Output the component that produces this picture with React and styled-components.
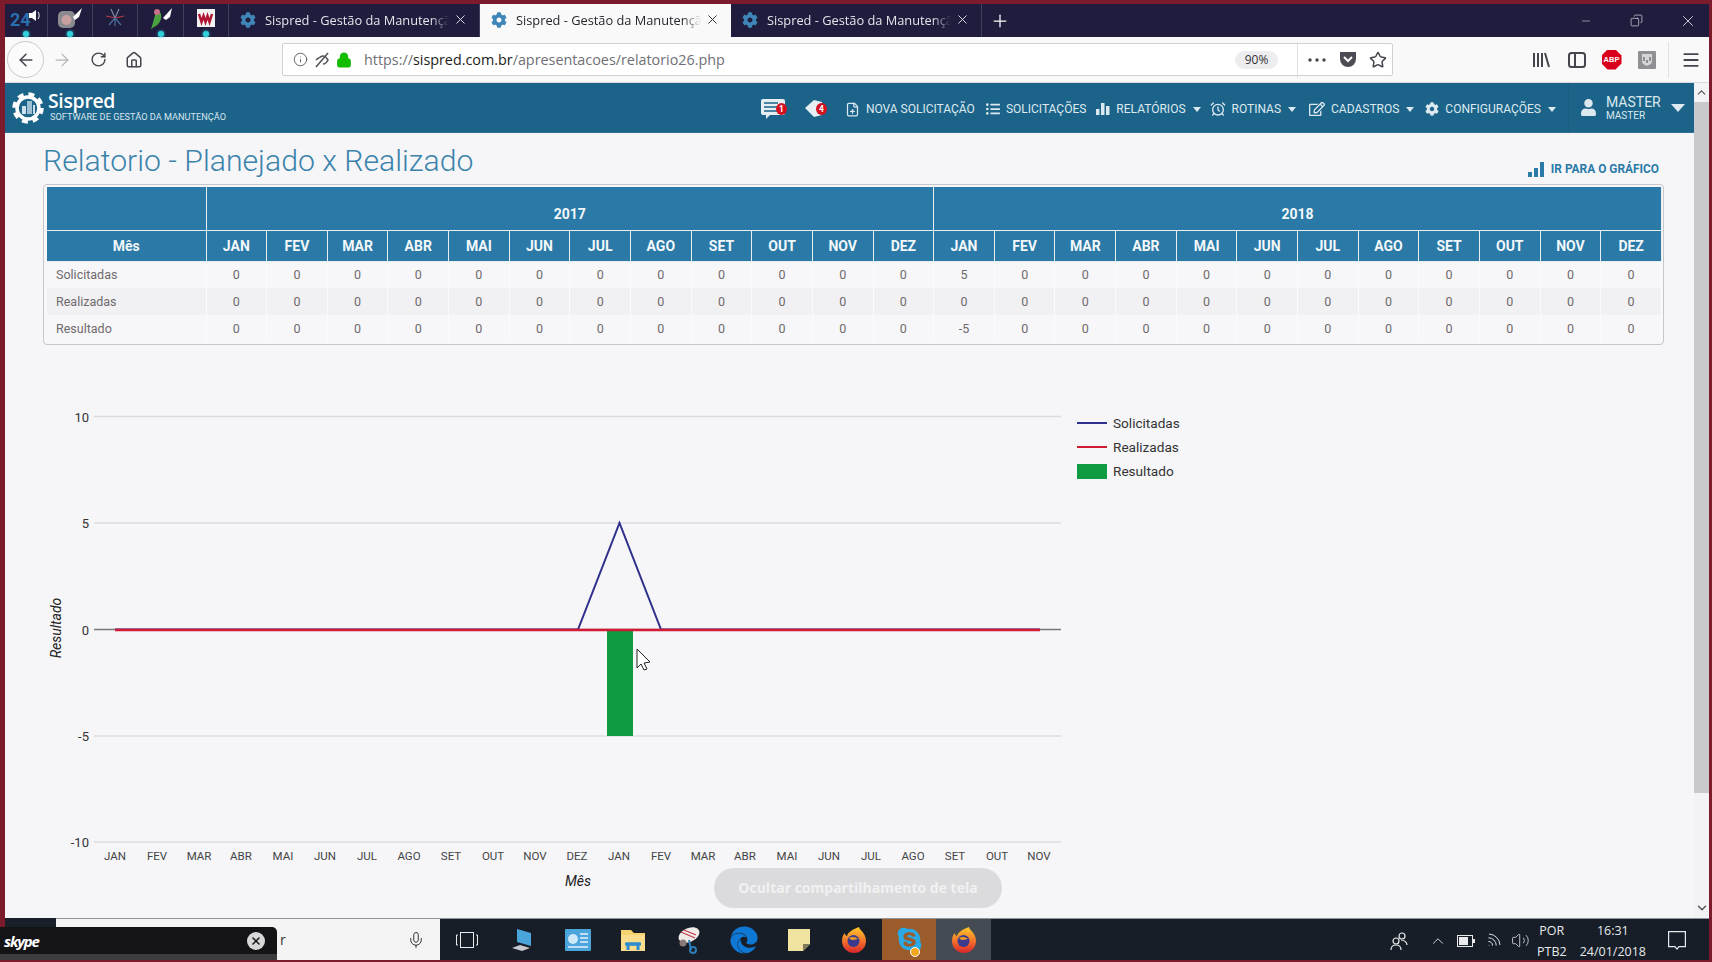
import React from 'react';
import styled, { createGlobalStyle } from 'styled-components';
import { ArrowLeft, ArrowRight, RotateCw, Home, Info, Lock, Star, X, Plus, Minus, Copy, Menu, Mic, ChevronUp, ChevronDown, Wifi, Volume2 } from 'lucide-react';
import { FaListUl, FaRegEdit, FaCog, FaUser, FaEdge, FaSkype } from 'react-icons/fa';
import { LuAlarmClock, LuFilePlus } from 'react-icons/lu';

const Global = createGlobalStyle`
  html, body { margin: 0; padding: 0; background: #6f1a28; }
  #root { width: 1712px; height: 962px; overflow: hidden; }
  * { box-sizing: border-box; }
`;

const Frame = styled.div`
  position: relative;
  width: 1712px;
  height: 962px;
  padding: 4px 3px 2px 5px;
  display: flex;
  flex-direction: column;
  background: #7c1b2b;
  overflow: hidden;
  font-family: Roboto, "Liberation Sans", sans-serif;
`;
const TabStrip = styled.div`
  height: 33px;
  display: flex;
  align-items: stretch;
  background: #1f1c3d;
  color: #fff;
  flex: none;
`;
const PinnedTab = styled.div`
  position: relative;
  width: ${p => p.$w}px;
  display: flex;
  align-items: center;
  justify-content: center;
  padding-bottom: 5px;
  border-right: 1px solid #41405c;
`;
const AudioDot = styled.span`
  position: absolute;
  bottom: 0;
  left: 50%;
  width: 6px;
  height: 6px;
  margin-left: -3px;
  border-radius: 50%;
  background: #2fd0da;
  box-shadow: 0 0 3px #2fd0da;
`;
const Tab = styled.div`
  width: 251px;
  display: flex;
  align-items: center;
  padding: 0 11px 2px;
  background: ${p => (p.$active ? '#f9f9fa' : 'transparent')};
  color: ${p => (p.$active ? '#26262c' : '#e4e4ea')};
  border-right: ${p => (p.$active ? '0' : '1px solid #41405c')};
`;
const TabIcon = styled(FaCog)`
  flex: none;
  margin-right: 9px;
  color: #3f86b8;
`;
const TabLabel = styled.span`
  flex: 1;
  font: 12.8px "Open Sans", sans-serif;
  white-space: nowrap;
  -webkit-mask-image: linear-gradient(90deg, #000 88%, transparent 98%);
  mask-image: linear-gradient(90deg, #000 88%, transparent 98%);
`;
const NewTab = styled.div`
  width: 36px;
  display: flex;
  align-items: center;
  justify-content: center;
`;
const WindowControls = styled.div`
  margin-left: auto;
  display: flex;
  align-items: center;
`;
const WinButton = styled.div`
  width: 51px;
  display: flex;
  justify-content: center;
  padding-left: 8px;
`;
const RestoreIcon = styled(Copy)`
  transform: scaleX(-1);
`;
const Toolbar = styled.div`
  height: 46px;
  flex: none;
  display: flex;
  align-items: center;
  background: #f9f9fa;
  border-bottom: 1px solid #d9d9dc;
  color: #45454d;
`;
const BackButton = styled.div`
  width: 37px;
  height: 37px;
  margin-left: 2px;
  border-radius: 50%;
  border: 1px solid #c9c9cc;
  background: #fbfbfb;
  display: flex;
  align-items: center;
  justify-content: center;
`;
const ToolIcon = styled.div`
  width: ${p => p.$w || 36}px;
  display: flex;
  align-items: center;
  justify-content: center;
  color: ${p => p.$c || '#45454d'};
`;
const UrlBar = styled.div`
  width: 1111px;
  height: 33px;
  margin-left: 130px;
  display: flex;
  align-items: center;
  background: #fff;
  border: 1px solid #d0d0d3;
  border-radius: 2px;
  padding-left: 8px;
`;
const UrlText = styled.div`
  font: 14.35px "Open Sans", sans-serif;
  color: #6f6f76;
  margin-left: 11px;
  flex: 1;
  white-space: nowrap;
  b { font-weight: 400; color: #1c1c20; }
`;
const ZoomPill = styled.div`
  width: 43px;
  height: 18px;
  border-radius: 9px;
  background: #ededf0;
  font: 12px "Open Sans", sans-serif;
  color: #333;
  display: flex;
  align-items: center;
  justify-content: center;
  margin-right: 16px;
`;
const ToolRight = styled.div`
  margin-left: 130px;
  display: flex;
  align-items: center;
  flex: 1;
`;
const ToolDivider = styled.div`
  width: 1px;
  height: 36px;
  background: #e0e0e3;
  margin: 0 4px 0 3px;
`;
const AbpBadge = styled.div`
  width: 20px;
  height: 20px;
  background: #d8001c;
  color: #fff;
  font: bold 7.5px "Liberation Sans", sans-serif;
  clip-path: polygon(30% 0, 70% 0, 100% 30%, 100% 70%, 70% 100%, 30% 100%, 0 70%, 0 30%);
  display: flex;
  align-items: center;
  justify-content: center;
`;
const Body = styled.div`
  flex: 1;
  min-height: 0;
  display: flex;
`;
const Page = styled.div`
  flex: 1;
  min-width: 0;
  display: flex;
  flex-direction: column;
  background: #f6f6f9;
`;
const Scrollbar = styled.div`
  width: 15px;
  flex: none;
  display: flex;
  flex-direction: column;
  align-items: stretch;
  background: #f3f3f5;
  color: #555;
`;
const ScrollUp = styled.div`
  height: 19px;
  display: flex;
  align-items: center;
  justify-content: center;
`;
const ScrollDown = styled.div`
  flex: 1;
  display: flex;
  align-items: flex-end;
  justify-content: center;
  padding-bottom: 3px;
`;
const ScrollThumb = styled.div`
  height: 691px;
  background: #c9c9cc;
`;
const Nav = styled.header`
  height: 50px;
  flex: none;
  display: flex;
  align-items: center;
  background: #1c6389;
  border-bottom: 1px solid #2a7098;
  color: #dce9f0;
`;
const Brand = styled.div`
  display: flex;
  align-items: center;
  padding-left: 7px;
  gap: 4px;
`;
const BrandText = styled.div`
  display: flex;
  flex-direction: column;
  margin-top: -3px;
`;
const BrandName = styled.div`
  font: 600 19.4px/21px "Open Sans", sans-serif;
  color: #fff;
  letter-spacing: -0.3px;
`;
const BrandSub = styled.div`
  font: 9.2px/11px Roboto, sans-serif;
  color: #d5e5ee;
  margin-left: 2px;
`;
const NavItems = styled.nav`
  margin-left: auto;
  display: flex;
  align-items: center;
  height: 100%;
`;
const AlertIcon = styled.div`
  position: relative;
  width: ${p => p.$w}px;
  margin-right: ${p => p.$mr}px;
  margin-top: 2px;
  display: flex;
  color: #e4eef3;
`;
const CountBadge = styled.span`
  position: absolute;
  right: 0;
  top: 4px;
  width: 11px;
  height: 12px;
  border-radius: 50%;
  background: #d4101f;
  color: #fff;
  font: bold 8.5px/12px Roboto, sans-serif;
  text-align: center;
`;
const NavItem = styled.div`
  display: flex;
  align-items: center;
  font-size: 12px;
  gap: 6px;
  margin-top: 3px;
  margin-right: ${p => p.$mr ?? 10}px;
  white-space: nowrap;
  color: #dce9f0;
  svg { flex: none; }
`;
const Caret = styled.span`
  width: 0;
  height: 0;
  margin: 0 ${p => (p.$big ? 0 : 1)}px;
  border-left: ${p => (p.$big ? 7 : 4.5)}px solid transparent;
  border-right: ${p => (p.$big ? 7 : 4.5)}px solid transparent;
  border-top: ${p => (p.$big ? 8 : 5)}px solid currentColor;
`;
const UserBox = styled.div`
  height: 100%;
  display: flex;
  align-items: center;
  border-left: 1px solid #1a5b7f;
  padding: 0 9px 0 11px;
`;
const UserText = styled.div`
  display: flex;
  flex-direction: column;
  margin: 0 9px 0 9px;
  width: 56px;
`;
const UserName = styled.div`
  font-size: 14px;
  line-height: 16px;
`;
const UserRole = styled.div`
  font-size: 10px;
  line-height: 12px;
`;
const Content = styled.main`
  flex: 1;
  min-height: 0;
  overflow: hidden;
  padding: 0 0 0 38px;
`;
const TitleRow = styled.div`
  height: 51px;
  display: flex;
  align-items: flex-start;
  justify-content: space-between;
  padding-right: 35px;
`;
const Title = styled.h1`
  margin: 9px 0 0;
  font: 300 30.2px/38px Roboto, sans-serif;
  color: #3b83aa;
`;
const GraphLink = styled.a`
  margin-top: 27px;
  display: flex;
  align-items: center;
  gap: 6px;
  font: 700 11.9px/18px Roboto, sans-serif;
  color: #2b7ba8;
`;
const TablePanel = styled.section`
  width: 1621px;
  height: 161px;
  border: 1px solid #c6c6cb;
  border-radius: 4px;
  padding: 2px 2px 2px 3px;
  background: #f7f7f9;
`;
const Grid = styled.table`
  width: 1615px;
  border-collapse: collapse;
  table-layout: fixed;
`;
const LabelCol = styled.col`
  width: 159px;
`;
const HeadCell = styled.th`
  height: ${p => p.$h}px;
  background: #2a79a6;
  color: #f2f7fa;
  font-size: 14px;
  font-weight: 700;
  padding: ${p => (p.$year ? '12px 0 0' : '0')};
  border: 1px solid #e8f0f4;
  border-top: 0;
  border-left-width: ${p => (p.$first ? 0 : 1)}px;
`;
const RowCell = styled.td`
  height: 27px;
  background: ${p => (p.$alt ? '#f1f1f3' : '#f7f7f9')};
  color: #6f6a6c;
  font-size: 12.5px;
  text-align: ${p => (p.$label ? 'left' : 'center')};
  padding: ${p => (p.$label ? '0 0 0 9px' : '0')};
  border-right: 1px solid #fbfbfc;
`;
const ChartWrap = styled.div`
  margin-top: 55px;
`;
const ChartSvg = styled.svg`
  display: block;
`;
const ChartText = styled.text`
  font-family: Roboto, sans-serif;
  font-size: ${p => p.$s}px;
  fill: ${p => p.$c || '#444'};
  font-style: ${p => (p.$i ? 'italic' : 'normal')};
  text-anchor: ${p => p.$a || 'middle'};
`;
const Taskbar = styled.footer`
  height: 42px;
  flex: none;
  display: flex;
  align-items: center;
  background: #171e27;
  border-top: 1px solid #8f949a;
  color: #e8eaec;
`;
const SearchBox = styled.div`
  width: 384px;
  height: 100%;
  margin-left: 51px;
  background: #f4f4f5;
  display: flex;
  align-items: center;
  justify-content: space-between;
  padding: 0 15px 0 224px;
  color: #333;
  font: 14px "Open Sans", sans-serif;
`;
const SkypeTab = styled.div`
  position: absolute;
  left: 5px;
  bottom: 35px;
  width: 51px;
  height: 9px;
  background: #1a2029;
`;
const SkypeOverlay = styled.div`
  position: absolute;
  left: 0;
  bottom: 2px;
  width: 277px;
  height: 33px;
  background: #141316;
  border-radius: 0 5px 0 0;
  border-bottom: 6px solid #3c3b3e;
  display: flex;
  align-items: center;
  justify-content: space-between;
  padding: 0 12px 0 4px;
  color: #fff;
  font: italic 700 15px "Open Sans", sans-serif;
  letter-spacing: -1.2px;
`;
const SkypeClose = styled.div`
  width: 18px;
  height: 18px;
  border-radius: 50%;
  background: #d8d8d8;
  color: #111;
  display: flex;
  align-items: center;
  justify-content: center;
`;
const TaskIcon = styled.div`
  width: ${p => p.$w || 55}px;
  height: 100%;
  display: flex;
  align-items: center;
  justify-content: center;
  position: relative;
  background: ${p => p.$bg || 'transparent'};
  flex: none;
`;
const WarnDot = styled.span`
  position: absolute;
  right: 16px;
  bottom: 3px;
  width: 10px;
  height: 10px;
  border-radius: 50%;
  background: #f4a61c;
  border: 1px solid #fff;
`;
const Tray = styled.div`
  margin-left: auto;
  height: 100%;
  display: flex;
  align-items: center;
  padding: 2px 23px 0 0;
  font: 12.5px/21px "Open Sans", sans-serif;
`;
const TrayIcon = styled.div`
  margin-right: ${p => p.$mr}px;
  display: flex;
`;
const WifiIcon = styled(Wifi)`
  transform: rotate(45deg);
`;
const TrayStack = styled.div`
  display: flex;
  flex-direction: column;
  align-items: center;
  margin-right: ${p => p.$mr}px;
`;
const ShareButton = styled.div`
  position: absolute;
  left: 714px;
  top: 868px;
  width: 288px;
  height: 40px;
  border-radius: 20px;
  background: #dbdbdd;
  color: #f1f1f2;
  font: 700 14px/40px "Open Sans", sans-serif;
  text-align: center;
`;

const months = ['JAN','FEV','MAR','ABR','MAI','JUN','JUL','AGO','SET','OUT','NOV','DEZ'];
const rows = [
  { label: 'Solicitadas', at: 12, val: 5 },
  { label: 'Realizadas', at: -1, val: 0 },
  { label: 'Resultado', at: 12, val: -5 },
];
const gridY = [[416.5,'10'],[523,'5'],[629.5,'0'],[736,'-5'],[842,'-10']];
const axisMonths = [...months, ...months.slice(0, 11)];

const Firefox = ({ id }) => (
  <svg width="30" height="30" viewBox="0 0 30 30">
    <defs>
      <linearGradient id={id} x1="0" y1="0" x2="0" y2="1"><stop offset="0" stopColor="#ffcb2b"/><stop offset="0.6" stopColor="#f0682a"/><stop offset="1" stopColor="#d8242e"/></linearGradient>
    </defs>
    <path d="M20 2c1 4 7 6 7 14a12 12 0 0 1-24 0c0-4 1-6 3-8 0 2 1 3 2 3 1-4 5-6 12-9z" fill={`url(#${id})`}/>
    <circle cx="14.5" cy="16" r="6" fill="#3b3a8f"/>
    <path d="M10 13c3-2 7-1 9 1-2 0-3 1-5 1s-3-1-4-2z" fill="#f39a22"/>
  </svg>
);

export default function App() {
  return (
    <Frame>
      <Global />
      <TabStrip>
        <PinnedTab $w={43}>
          <svg width="32" height="22" viewBox="0 0 32 22"><text x="0" y="19" fontFamily="Roboto" fontWeight="700" fontSize="18" fill="#2a6fb0">24</text><path d="M19 6h3l4-3v11l-4-3h-3z" fill="#fff"/><path d="M28 5c1.500 2 1.500 5 0 7" stroke="#fff" fill="none"/></svg>
          <AudioDot />
        </PinnedTab>
        <PinnedTab $w={45}>
          <svg width="28" height="24" viewBox="0 0 28 24"><rect x="2" y="5" width="17" height="17" rx="5" fill="#8a8a90"/><circle cx="10.500" cy="14" r="5" fill="#c8a0a0"/><path d="M17 11l9-9-3 9-4 3z" fill="#fff"/></svg>
          <AudioDot />
        </PinnedTab>
        <PinnedTab $w={45}>
          <svg width="22" height="22" viewBox="0 0 22 22" stroke="#7f8aa0" strokeWidth="1.200"><path d="M11 11L7 2M11 11l4-9"/><path d="M11 11L2 9M11 11l9-2" stroke="#b83a48"/><path d="M11 11L5 18M11 11l6 7M11 11v8" stroke="#4a6f98"/></svg>
        </PinnedTab>
        <PinnedTab $w={46}>
          <svg width="26" height="24" viewBox="0 0 26 24"><path d="M3 23c2-6 3-10 4-14 0-4 5-5 6-1 1 6-2 11-7 13z" fill="#4aa33f"/><circle cx="9" cy="6" r="3" fill="#c9708a"/><path d="M15 12l9-10-2 9-4 3z" fill="#fff"/></svg>
          <AudioDot />
        </PinnedTab>
        <PinnedTab $w={45}>
          <svg width="18" height="18" viewBox="0 0 18 18"><rect width="18" height="18" fill="#f2f2f2"/><path d="M2.500 5l2.500 8 2-6 2 6 2-6 2 6 2.500-8" transform="translate(-.5 0)" fill="none" stroke="#b01634" strokeWidth="2.500"/></svg>
          <AudioDot />
        </PinnedTab>
        {[false, true, false].map((active, i) => (
          <Tab key={i} $active={active}>
            <TabIcon size={16} />
            <TabLabel>Sispred - Gestão da Manutençã</TabLabel>
            <X size={15} strokeWidth={1.500} />
          </Tab>
        ))}
        <NewTab><Plus size={20} strokeWidth={1.500} /></NewTab>
        <WindowControls>
          <WinButton><Minus size={12} strokeWidth={1} /></WinButton>
          <WinButton><RestoreIcon size={13} strokeWidth={1.100} /></WinButton>
          <WinButton><X size={18} strokeWidth={1} /></WinButton>
        </WindowControls>
      </TabStrip>

      <Toolbar>
        <BackButton><ArrowLeft size={20} strokeWidth={1.800} /></BackButton>
        <ToolIcon $w={36} $c="#b4b4b8"><ArrowRight size={20} strokeWidth={1.500} /></ToolIcon>
        <ToolIcon $w={36}><RotateCw size={17} strokeWidth={2} /></ToolIcon>
        <ToolIcon $w={36}><Home size={18} strokeWidth={2} /></ToolIcon>
        <UrlBar>
          <ToolIcon $w={18}><Info size={15} strokeWidth={1.300} /></ToolIcon>
          <ToolIcon $w={26}>
            <svg width="18" height="18" viewBox="0 0 18 18" fill="none" stroke="#55555c" strokeWidth="1.600"><path d="M3 16L15 2"/><path d="M6 7c3-3 6-3 9 2-1 2-3 4-5 4"/><path d="M3 9c1-1 2-2 3-2"/></svg>
          </ToolIcon>
          <ToolIcon $w={18} $c="#12bc00"><Lock size={16} strokeWidth={2.600} fill="#12bc00" /></ToolIcon>
          <UrlText>https://<b>sispred.com.br</b>/apresentacoes/relatorio26.php</UrlText>
          <ZoomPill>90%</ZoomPill>
          <ToolDivider />
          <ToolIcon $w={30}>
            <svg width="18" height="4" viewBox="0 0 18 4" fill="#45454d"><circle cx="2" cy="2" r="1.700"/><circle cx="9" cy="2" r="1.700"/><circle cx="16" cy="2" r="1.700"/></svg>
          </ToolIcon>
          <ToolIcon $w={32}>
            <svg width="18" height="17" viewBox="0 0 18 17"><path d="M1 1h16a1 1 0 0 1 0 1v6a8 8 0 0 1-16 0V2a1 1 0 0 1 0-1z" fill="#4c4c54"/><path d="M5 6l4 4 4-4" stroke="#fff" strokeWidth="2" fill="none"/></svg>
          </ToolIcon>
          <ToolIcon $w={28}><Star size={18} strokeWidth={2} /></ToolIcon>
        </UrlBar>
        <ToolRight>
          <ToolIcon $w={36}>
            <svg width="18" height="18" viewBox="0 0 18 18" stroke="#45454d" strokeWidth="2"><path d="M2 2v14M6 2v14M10 2v14M13 2l4 14" /></svg>
          </ToolIcon>
          <ToolIcon $w={35}>
            <svg width="18" height="16" viewBox="0 0 18 16" fill="none" stroke="#45454d" strokeWidth="2"><rect x="1" y="1" width="16" height="14" rx="2.500"/><path d="M7 1v14"/></svg>
          </ToolIcon>
          <ToolIcon $w={35}><AbpBadge>ABP</AbpBadge></ToolIcon>
          <ToolIcon $w={36}>
            <svg width="18" height="18" viewBox="0 0 18 18"><rect width="18" height="18" rx="1" fill="#8f8f94"/><path d="M4 3h10v7c0 3-3 4-5 5-2-1-5-2-5-5z" fill="#d6d6d8"/><path d="M6 6v4M12 6v4M9 9v3" stroke="#777" strokeWidth="1.500"/></svg>
          </ToolIcon>
          <ToolDivider />
          <ToolIcon $w={36}><Menu size={20} strokeWidth={2.200} /></ToolIcon>
        </ToolRight>
      </Toolbar>

      <Body>
        <Page>
          <Nav>
            <Brand>
              <svg width="32" height="34" viewBox="0 0 32 34">
                <circle cx="16" cy="17" r="11" fill="none" stroke="#fff" strokeWidth="3.500"/>
                <circle cx="16" cy="17" r="14" fill="none" stroke="#fff" strokeWidth="3.500" strokeDasharray="6 5"/>
                <rect x="10" y="15" width="4" height="8" fill="#cfe0ea"/><rect x="15" y="10" width="5" height="13" fill="#9ec0d4"/><rect x="21" y="14" width="2" height="9" fill="#cfe0ea"/>
              </svg>
              <BrandText>
                <BrandName>Sispred</BrandName>
                <BrandSub>SOFTWARE DE GESTÃO DA MANUTENÇÃO</BrandSub>
              </BrandText>
            </Brand>
            <NavItems>
              <AlertIcon $w={26} $mr={18}>
                <svg width="24" height="20" viewBox="0 0 24 20">
                  <path d="M2 0h20a2 2 0 0 1 2 2v12a2 2 0 0 1-2 2H9l-4 4v-4H2a2 2 0 0 1-2-2V2a2 2 0 0 1 2-2z" fill="#e4eef3"/>
                  <path d="M3 4h14M3 8h14M3 12h14" stroke="#1c6389" strokeWidth="1.500"/>
                </svg>
                <CountBadge>1</CountBadge>
              </AlertIcon>
              <AlertIcon $w={22} $mr={18}>
                <svg width="17" height="19" viewBox="0 0 17 19" fill="currentColor"><path d="M0 9L9 1l8 2v13l-8 2z"/></svg>
                <CountBadge>4</CountBadge>
              </AlertIcon>
              <NavItem $mr={11}><LuFilePlus size={15} />NOVA SOLICITAÇÃO</NavItem>
              <NavItem><FaListUl size={14} />SOLICITAÇÕES</NavItem>
              <NavItem $mr={8}>
                <svg width="14" height="14" viewBox="0 0 14 14" fill="currentColor"><rect y="7" width="3.500" height="6"/><rect x="5" y="1" width="3.500" height="12"/><rect x="10" y="4" width="3.500" height="9"/></svg>
                RELATÓRIOS<Caret />
              </NavItem>
              <NavItem $mr={12}><LuAlarmClock size={16} />ROTINAS<Caret /></NavItem>
              <NavItem $mr={10}><FaRegEdit size={16} />CADASTROS<Caret /></NavItem>
              <NavItem $mr={11}><FaCog size={14} />CONFIGURAÇÕES<Caret /></NavItem>
              <UserBox>
                <FaUser size={17} />
                <UserText>
                  <UserName>MASTER</UserName>
                  <UserRole>MASTER</UserRole>
                </UserText>
                <Caret $big />
              </UserBox>
            </NavItems>
          </Nav>
          <Content>
            <TitleRow>
              <Title>Relatorio - Planejado x Realizado</Title>
              <GraphLink>
                <svg width="17" height="15" viewBox="0 0 17 15" fill="#2b7ba8"><rect y="10" width="4" height="5"/><rect x="6" y="6" width="4" height="9"/><rect x="12" y="0" width="4" height="15"/></svg>
                IR PARA O GRÁFICO
              </GraphLink>
            </TitleRow>
            <TablePanel>
              <Grid>
                <colgroup>
                  <LabelCol />
                  {Array.from({ length: 24 }, (_, i) => <col key={i} />)}
                </colgroup>
                <thead>
                  <tr>
                    <HeadCell $h={43} $first />
                    <HeadCell $h={43} $year colSpan={12}>2017</HeadCell>
                    <HeadCell $h={43} $year colSpan={12}>2018</HeadCell>
                  </tr>
                  <tr>
                    <HeadCell $h={31} $first>Mês</HeadCell>
                    {[...months, ...months].map((m, i) => <HeadCell key={i} $h={31}>{m}</HeadCell>)}
                  </tr>
                </thead>
                <tbody>
                  {rows.map((r, ri) => (
                    <tr key={r.label}>
                      <RowCell $label $alt={ri === 1}>{r.label}</RowCell>
                      {Array.from({ length: 24 }, (_, i) => (
                        <RowCell key={i} $alt={ri === 1}>{i === r.at ? r.val : 0}</RowCell>
                      ))}
                    </tr>
                  ))}
                </tbody>
              </Grid>
            </TablePanel>
            <ChartWrap>
              <ChartSvg width="1200" height="500" viewBox="43 400 1200 500">
                {gridY.map(([y, l]) => (
                  <g key={l}>
                    <line x1="94" x2="1061" y1={y} y2={y} stroke={l === '0' ? '#777' : '#dcdcde'} strokeWidth="1.300" />
                    <ChartText x="89" y={y + 5} $s={13} $a="end" $c="#333">{l}</ChartText>
                  </g>
                ))}
                <rect x="607" y="630" width="26" height="106" fill="#0f9b42" />
                <polyline points="115,629.5 578,629.5 619.5,523 661,629.5 1040,629.5" fill="none" stroke="#2f2f8c" strokeWidth="2" />
                <line x1="115" x2="1040" y1="630" y2="630" stroke="#d21a35" strokeWidth="2.600" />
                {axisMonths.map((m, i) => (
                  <ChartText key={i} x={115 + i * 42} y={860} $s={11.500}>{m}</ChartText>
                ))}
                <ChartText x="578" y="886" $s={14} $i $c="#222">Mês</ChartText>
                <ChartText x="0" y="0" $s={14} $i $c="#222" transform="translate(61 628) rotate(-90)">Resultado</ChartText>
                <line x1="1077" x2="1107" y1="423" y2="423" stroke="#2f2f8c" strokeWidth="2" />
                <line x1="1077" x2="1107" y1="447" y2="447" stroke="#d21a35" strokeWidth="2" />
                <rect x="1077" y="464" width="30" height="15" fill="#0f9b42" />
                <ChartText x="1113" y="428" $s={13.600} $a="start" $c="#333">Solicitadas</ChartText>
                <ChartText x="1113" y="452" $s={13.600} $a="start" $c="#333">Realizadas</ChartText>
                <ChartText x="1113" y="476" $s={13.600} $a="start" $c="#333">Resultado</ChartText>
                <path d="M637 649v19l4-4 3 6 3-1-3-6 6-1z" fill="#fff" stroke="#222" strokeWidth="1" />
              </ChartSvg>
            </ChartWrap>
          </Content>
        </Page>
        <Scrollbar>
          <ScrollUp><ChevronUp size={13} strokeWidth={2} /></ScrollUp>
          <ScrollThumb />
          <ScrollDown><ChevronDown size={14} strokeWidth={2.500} /></ScrollDown>
        </Scrollbar>
      </Body>

      <Taskbar>
        <SearchBox>
          <span>r</span>
          <Mic size={18} strokeWidth={1.300} />
        </SearchBox>
        <TaskIcon $w={53}>
          <svg width="24" height="18" viewBox="0 0 24 18" fill="none" stroke="#e8eaec"><rect x="5.500" y="1.500" width="13" height="15"/><path d="M3 4H1.500v10H3M21 4h1.500v10H21"/></svg>
        </TaskIcon>
        <TaskIcon $w={58}>
          <svg width="26" height="26" viewBox="0 0 26 26"><path d="M8 2l14 4v13L8 15z" fill="#4aa5dc"/><path d="M3 21l8-3 10 3-8 3z" fill="#c8cbd0"/></svg>
        </TaskIcon>
        <TaskIcon $w={54}>
          <svg width="26" height="22" viewBox="0 0 26 22"><rect width="26" height="22" rx="1" fill="#4aa5dc"/><circle cx="8" cy="10" r="5" fill="#cfe8f7"/><path d="M15 5h8M15 9h8M15 13h8M3 18h20" stroke="#e6f3fb" strokeWidth="1.500"/></svg>
        </TaskIcon>
        <TaskIcon $w={56}>
          <svg width="26" height="24" viewBox="0 0 26 24"><path d="M1 2h10l3 3h11v18H1z" fill="#f3d26f"/><path d="M1 7h24v16H1z" fill="#f7dd8c"/><path d="M8 22v-6h10v6" fill="none" stroke="#2b8ccf" strokeWidth="3"/><path d="M5 16h16" stroke="#2b8ccf" strokeWidth="3"/></svg>
        </TaskIcon>
        <TaskIcon $w={55}>
          <svg width="26" height="28" viewBox="0 0 26 28"><ellipse cx="13" cy="9" rx="11" ry="7" transform="rotate(-25 13 9)" fill="#f0ebe8"/><path d="M5 6l14 6M8 4l12 5" stroke="#c0394a" strokeWidth="1.200"/><circle cx="7" cy="17" r="3.500" fill="#8a7a78"/><path d="M13 14l2 10" stroke="#2e7db8" strokeWidth="2"/><circle cx="17" cy="24" r="3" fill="none" stroke="#2e7db8" strokeWidth="2"/></svg>
        </TaskIcon>
        <TaskIcon $w={56}><FaEdge size={28} color="#0f78d4" /></TaskIcon>
        <TaskIcon $w={54}>
          <svg width="22" height="22" viewBox="0 0 22 22"><path d="M0 0h22v15l-7 7H0z" fill="#f1e3a0"/><path d="M15 22v-7h7z" fill="#807a58"/></svg>
        </TaskIcon>
        <TaskIcon $w={56}><Firefox id="ff-a" /></TaskIcon>
        <TaskIcon $w={54} $bg="#9c5b2a"><FaSkype size={27} color="#2aa9e6" /><WarnDot /></TaskIcon>
        <TaskIcon $w={55} $bg="#454b53"><Firefox id="ff-b" /></TaskIcon>
        <Tray>
          <TrayIcon $mr={21}>
            <svg width="18" height="20" viewBox="0 0 18 20" fill="none" stroke="#e8eaec" strokeWidth="1.200"><circle cx="6" cy="10" r="3"/><path d="M1 19c0-3 2-5 5-5s5 2 5 5"/><circle cx="12" cy="5" r="3"/><path d="M11 9c3 0 6 2 6 5"/></svg>
          </TrayIcon>
          <TrayIcon $mr={10}><ChevronUp size={18} strokeWidth={1.200} /></TrayIcon>
          <TrayIcon $mr={9}>
            <svg width="18" height="12" viewBox="0 0 18 12"><rect x=".5" y=".5" width="15" height="11" fill="none" stroke="#e8eaec"/><rect x="2" y="2" width="9" height="8" fill="#e8eaec"/><rect x="16" y="4" width="2" height="4" fill="#e8eaec"/></svg>
          </TrayIcon>
          <TrayIcon $mr={9}><WifiIcon size={18} strokeWidth={1.200} /></TrayIcon>
          <TrayIcon $mr={7}><Volume2 size={19} strokeWidth={1} /></TrayIcon>
          <TrayStack $mr={13}>
            <span>POR</span>
            <span>PTB2</span>
          </TrayStack>
          <TrayStack $mr={22}>
            <span>16:31</span>
            <span>24/01/2018</span>
          </TrayStack>
          <svg width="18" height="20" viewBox="0 0 18 20" fill="none" stroke="#e8eaec" strokeWidth="1.200"><path d="M.6.6h16.800v15H11l-2 2.500L7 15.600H.6z"/></svg>
        </Tray>
      </Taskbar>

      <SkypeTab />
      <SkypeOverlay>
        <span>skype</span>
        <SkypeClose><X size={12} strokeWidth={3} /></SkypeClose>
      </SkypeOverlay>
      <ShareButton>Ocultar compartilhamento de tela</ShareButton>
    </Frame>
  );
}
